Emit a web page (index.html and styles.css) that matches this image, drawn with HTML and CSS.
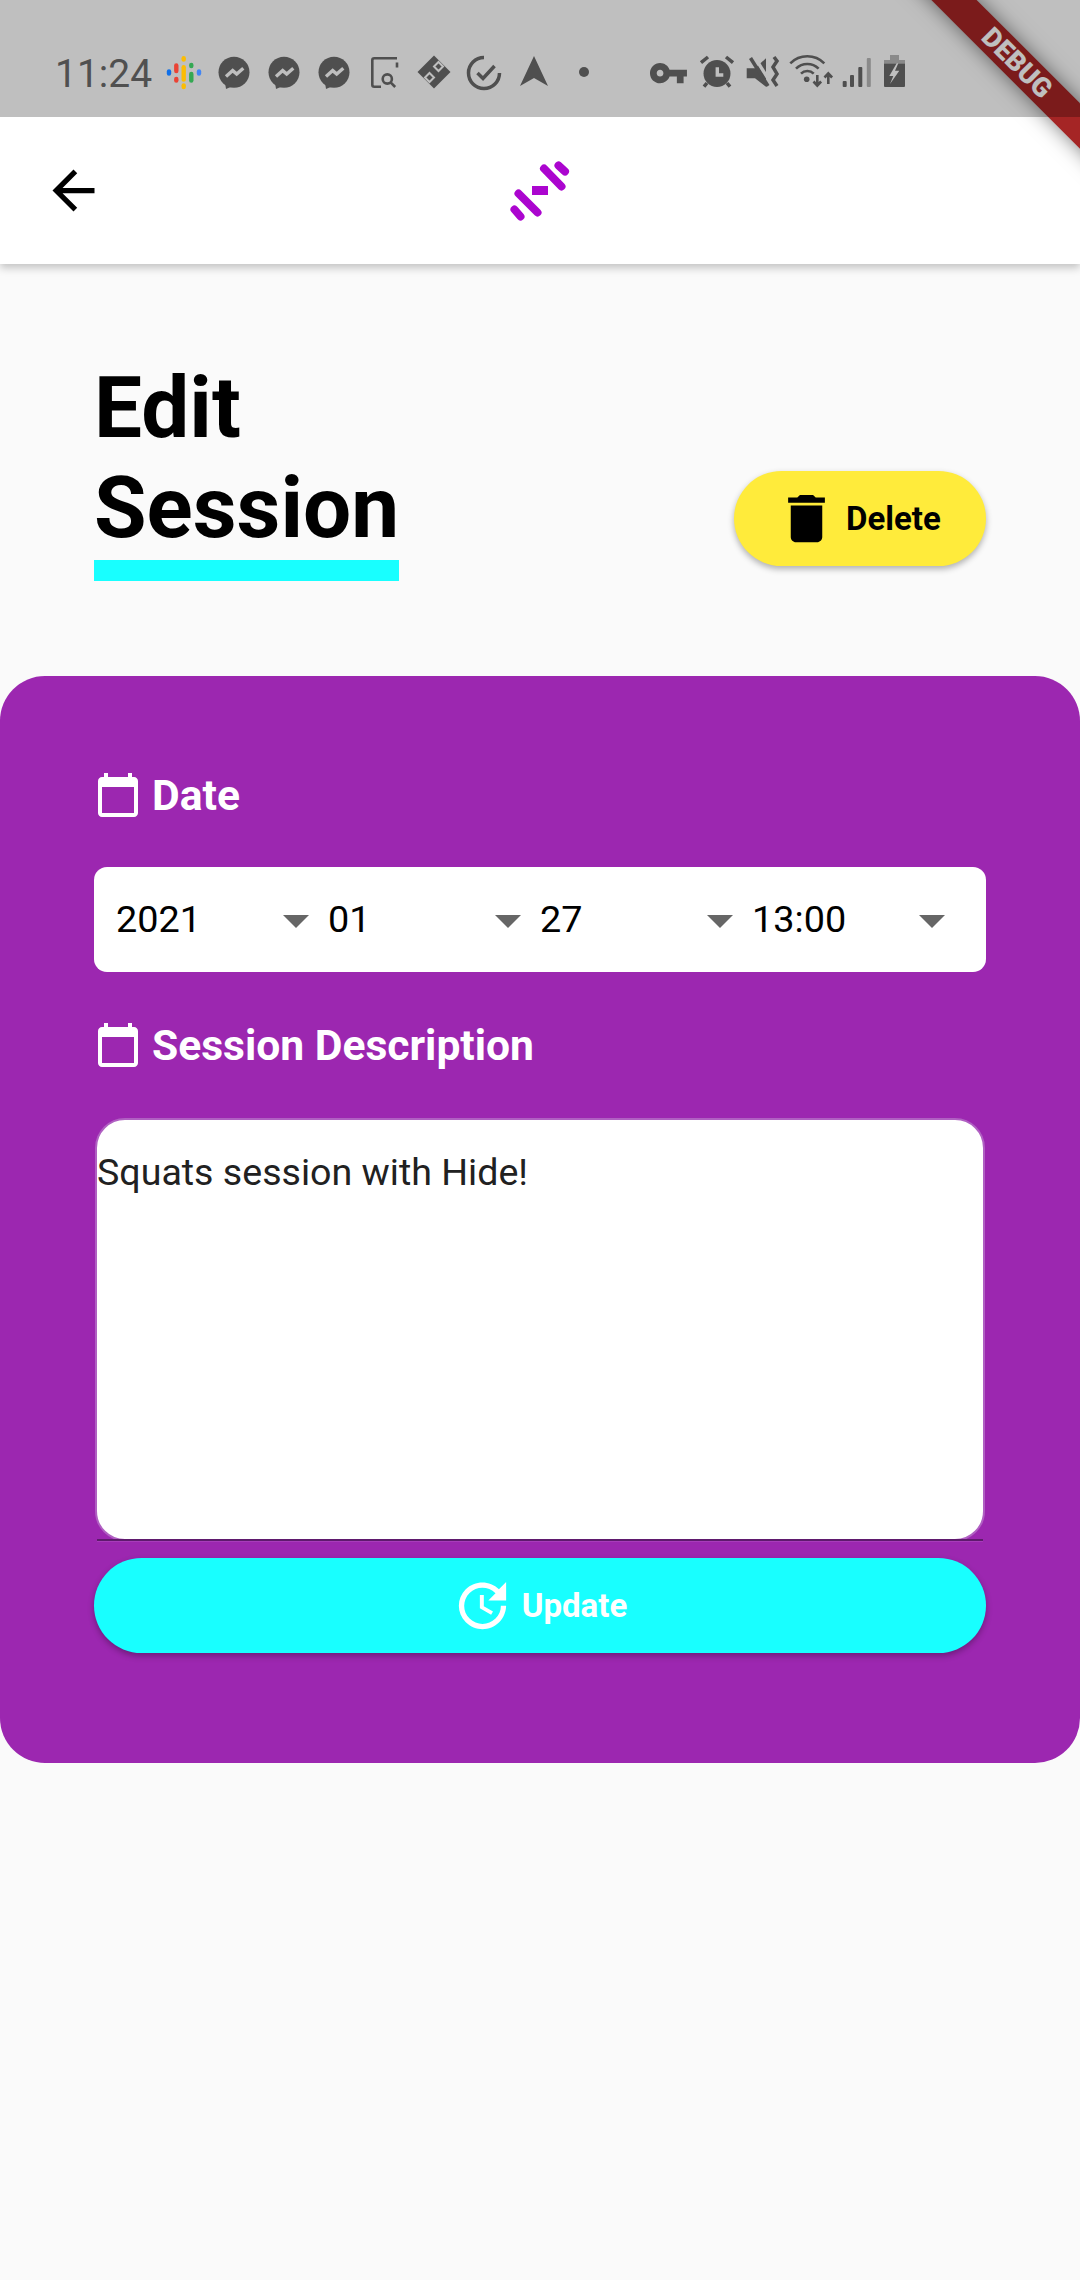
FILE: index.html
```html
<!DOCTYPE html>
<html lang="en">
<head>
<meta charset="utf-8">
<title>Edit Session</title>
<link rel="stylesheet" href="styles.css">
</head>
<body>
<div class="screen">
  <div class="debug-banner">DEBUG</div>

  <header class="top">
    <div class="statusbar">
      <span class="time">11:24</span>
      <svg class="cell" viewBox="0 0 50 50">
        <rect x="7.8" y="22.3" width="4.4" height="6.4" rx="2.2" fill="#0f6fe8"/>
        <rect x="15.1" y="16.3" width="4.4" height="10" rx="2.2" fill="#ea4335"/>
        <rect x="15.1" y="29.7" width="4.4" height="6" rx="2.2" fill="#ea4335"/>
        <rect x="22.5" y="9" width="4.4" height="5.7" rx="2.2" fill="#fbbc04"/>
        <rect x="22.5" y="18" width="4.4" height="16.7" rx="2.2" fill="#fbbc04"/>
        <rect x="22.5" y="36.3" width="4.4" height="6" rx="2.2" fill="#fbbc04"/>
        <rect x="30.1" y="15.7" width="4.4" height="5.6" rx="2.2" fill="#34a853"/>
        <rect x="30.1" y="24.7" width="4.4" height="11" rx="2.2" fill="#34a853"/>
        <rect x="37.8" y="22.3" width="4.4" height="6.4" rx="2.2" fill="#4285f4"/>
      </svg>
      <svg class="cell" viewBox="0 0 50 50"><circle cx="25" cy="25.3" r="15.5" class="ink"/><path class="ink" d="M16 35l1 7 7-3z"/><path class="cut" d="M17 29.6l6.7-6 4 3.4 6.6-5.7"/></svg>
      <svg class="cell" viewBox="0 0 50 50"><circle cx="25" cy="25.3" r="15.5" class="ink"/><path class="ink" d="M16 35l1 7 7-3z"/><path class="cut" d="M17 29.6l6.7-6 4 3.4 6.6-5.7"/></svg>
      <svg class="cell" viewBox="0 0 50 50"><circle cx="25" cy="25.3" r="15.5" class="ink"/><path class="ink" d="M16 35l1 7 7-3z"/><path class="cut" d="M17 29.6l6.7-6 4 3.4 6.6-5.7"/></svg>
      <svg class="cell" viewBox="0 0 50 50"><path class="line" d="M38 11.3H15.3a2 2 0 0 0-2 2v24.4a2 2 0 0 0 2 2H22M38 15.5v5"/><circle class="line" cx="28.3" cy="32" r="4.6"/><path class="line" d="M31.6 35.4l4.6 4.6"/></svg>
      <svg class="cell" viewBox="0 0 50 50"><path class="ink" d="M25 8.500l16.500 16.500-16.500 16.500L8.500 25z"/><path class="cut thin" d="M29.500 15l4.500 4.500-4.500 4.500-4.500-4.500zM20.500 26l4.500 4.500-4.500 4.500-4.500-4.500z"/></svg>
      <svg class="cell" viewBox="0 0 50 50"><path class="line thick" d="M25 10.500a15.500 15.500 0 1 0 15.500 15.500"/><path class="line thick" d="M18.500 26l5.500 5.500 11.500-12.500"/></svg>
      <svg class="cell" viewBox="0 0 50 50"><path class="ink" d="M25 9l14 30-14-8-14 8z"/></svg>
      <svg class="cell" viewBox="0 0 50 50"><circle class="ink" cx="25" cy="25" r="5"/></svg>

      <div class="status-right">
        <svg class="w48" viewBox="0 0 48 50"><g transform="translate(3.3 6) scale(1.68)"><path class="ink" d="M12.65 10C11.83 7.67 9.61 6 7 6c-3.31 0-6 2.69-6 6s2.69 6 6 6c2.61 0 4.83-1.67 5.65-4H17v4h4v-4h2v-4H12.65zM7 14c-1.1 0-2-.9-2-2s.9-2 2-2 2 .9 2 2-.9 2-2 2z"/></g></svg>
        <svg class="w48" viewBox="0 0 48 50"><circle class="ink" cx="24" cy="26.5" r="13.5"/><path class="line thick" d="M8 15.7L15 10M40 15.7L33 10M11 39.7l3-3.7M37 39.7l-3-3.7"/><path class="cut" d="M24.3 20.3V28h6"/></svg>
        <svg class="w44" viewBox="0 0 44 50"><path class="ink" d="M5.7 21.3H14l11-10v28.4l-11-8.4H5.7z"/><path class="cut" d="M13 9l18 29"/><path class="line thick" d="M9.5 11L27 39"/><path class="line thick" d="M33 10l3 4-4 6 4 7-4 6 4 6"/></svg>
        <svg class="w53" viewBox="0 0 53 50"><path class="line" d="M5.3 16.3A24 24 0 0 1 39.3 16.3M11 21.7A16 16 0 0 1 33.6 21.7M16 26.6A9 9 0 0 1 28.7 26.6"/><circle class="ink" cx="21.7" cy="32.3" r="2.8"/><path class="line" d="M32.3 28v10M28.5 34.5l3.8 4 3.8-4M43.3 37V27M39.5 30.5l3.8-4 3.8 4"/></svg>
        <svg class="w38" viewBox="0 0 38 50"><rect class="ink" x="4.7" y="34" width="4" height="6" rx="1"/><rect class="ink" x="12" y="28" width="4" height="12" rx="1"/><rect class="ink" x="20.3" y="20" width="4" height="20" rx="1"/><rect class="dim" x="28.8" y="11" width="4" height="29" rx="1"/></svg>
        <svg class="w36" viewBox="0 0 36 50"><path class="dim" d="M14 8h9v5h6v3.5H8V13h6z"/><path class="ink" d="M8 16.5h21V39a1 1 0 0 1-1 1H9a1 1 0 0 1-1-1z"/><path class="bolt" d="M20.7 16.3L13.3 29h4L14 37l9.3-13.3H19l3.3-7.4z"/></svg>
      </div>
    </div>

    <div class="appbar">
      <svg class="back" viewBox="0 0 24 24"><path d="M20 11H7.83l5.59-5.59L12 4l-8 8 8 8 1.41-1.41L7.83 13H20v-2z"/></svg>
      <svg class="logo" viewBox="500 150 80 80">
        <path class="logo-stroke" d="M558.5 165.5l6.5 6M544 168.5l17.5 18M518.5 193.500l19 19M514.500 209.500l6 7"/>
        <rect class="logo-fill" x="532" y="186" width="16" height="9"/>
      </svg>
      <span></span>
    </div>
  </header>

  <main>
    <section class="title-row">
      <h1 class="title">Edit<br>Session</h1>
      <button class="pill delete">
        <svg class="pill-icon" viewBox="0 0 24 24"><path d="M19 4h-3.5l-1-1h-5l-1 1H5v2h14V4zM6 19c0 1.1.9 2 2 2h8c1.1 0 2-.9 2-2V7H6v12z"/></svg>
        <span>Delete</span>
      </button>
    </section>

    <section class="panel">
      <div class="label">
        <svg class="label-icon" viewBox="0 0 24 24"><path d="M20 3h-1V1h-2v2H7V1H5v2H4c-1.1 0-2 .9-2 2v16c0 1.1.9 2 2 2h16c1.1 0 2-.9 2-2V5c0-1.1-.9-2-2-2zm0 18H4V8h16v13z"/></svg>
        <span>Date</span>
      </div>
      <div class="selects">
        <div class="select"><span>2021</span><svg class="caret" viewBox="0 0 26 13"><path d="M0 0h26L13 13z"/></svg></div>
        <div class="select"><span>01</span><svg class="caret" viewBox="0 0 26 13"><path d="M0 0h26L13 13z"/></svg></div>
        <div class="select"><span>27</span><svg class="caret" viewBox="0 0 26 13"><path d="M0 0h26L13 13z"/></svg></div>
        <div class="select"><span>13:00</span><svg class="caret" viewBox="0 0 26 13"><path d="M0 0h26L13 13z"/></svg></div>
      </div>
      <div class="label">
        <svg class="label-icon" viewBox="0 0 24 24"><path d="M20 3h-1V1h-2v2H7V1H5v2H4c-1.1 0-2 .9-2 2v16c0 1.1.9 2 2 2h16c1.1 0 2-.9 2-2V5c0-1.1-.9-2-2-2zm0 18H4V8h16v13z"/></svg>
        <span>Session Description</span>
      </div>
      <div class="description">Squats session with Hide!</div>
      <button class="pill update">
        <svg class="pill-icon" viewBox="0 0 24 24"><path d="M21 10.12h-6.78l2.74-2.82c-2.73-2.7-7.15-2.8-9.88-.1-2.73 2.71-2.73 7.08 0 9.79s7.15 2.71 9.88 0C18.32 15.65 19 14.08 19 12.1h2c0 1.98-.88 4.55-2.64 6.29-3.51 3.48-9.21 3.48-12.72 0-3.5-3.47-3.53-9.11-.02-12.58s9.14-3.47 12.65 0L21 3v7.12zM12.5 8v4.25l3.5 2.08-.72 1.21L11 13V8h1.5z"/></svg>
        <span>Update</span>
      </button>
    </section>
  </main>
</div>
</body>
</html>
```

FILE: styles.css
```css
* { box-sizing: border-box; }
html, body { margin: 0; padding: 0; }
body { font-family: Roboto, sans-serif; background: #fafafa; }

.screen {
  position: relative;
  width: 1080px;
  height: 2280px;
  overflow: hidden;
  background: #fafafa;
}

.top { background: #fff; box-shadow: 0 4px 8px rgba(0, 0, 0, 0.22); }

/* status bar: a translucent scrim that also dims the debug ribbon */
.statusbar {
  position: relative;
  z-index: 3;
  display: flex;
  align-items: flex-start;
  height: 117px;
  padding: 47px 168px 0 55px;
  background: rgba(0, 0, 0, 0.25);
}
.time {
  width: 104px;
  font-size: 39px;
  line-height: 54px;
  color: #505050;
}
.cell { width: 50px; height: 50px; flex: none; }
.status-right { display: flex; margin-left: auto; }
.w48 { width: 48px; height: 50px; }
.w44 { width: 44px; height: 50px; }
.w53 { width: 53px; height: 50px; }
.w38 { width: 38px; height: 50px; }
.w36 { width: 36px; height: 50px; }
.ink { fill: #4f4f4f; }
.dim { fill: #8a8a8a; }
.bolt { fill: #bfbfbf; }
.cut { fill: none; stroke: #bfbfbf; stroke-width: 3.4; }
.cut.thin { stroke-width: 2; }
.line { fill: none; stroke: #4f4f4f; stroke-width: 2.6; }
.line.thick { stroke-width: 3.5; }

.debug-banner {
  position: absolute;
  z-index: 2;
  left: 867px;
  top: 47px;
  width: 300px;
  height: 32px;
  transform: rotate(45deg);
  background: #a52525;
  box-shadow: 0 0 20px rgba(0, 0, 0, 0.5);
  color: #fff;
  font-size: 27px;
  font-weight: 900;
  line-height: 32px;
  text-align: center;
}

.appbar {
  display: grid;
  grid-template-columns: 1fr auto 1fr;
  align-items: start;
  height: 147px;
}
.back { width: 63px; height: 63px; margin: 42px 0 0 42px; }
.logo { width: 80px; height: 80px; margin-top: 33px; }
.logo-stroke { fill: none; stroke: #ab05cf; stroke-width: 8; stroke-linecap: round; }
.logo-fill { fill: #ab05cf; }

.title-row {
  display: flex;
  align-items: flex-end;
  justify-content: space-between;
  padding: 94px 94px 0;
}
.title {
  width: 305px;
  margin: 0;
  padding-bottom: 2px;
  border-bottom: 21px solid #18ffff;
  font-size: 85.4px;
  font-weight: 700;
  line-height: 100px;
  color: #000;
}
.pill {
  display: flex;
  align-items: center;
  height: 95px;
  border: 0;
  border-radius: 48px;
  font-family: inherit;
  font-size: 33px;
  font-weight: 700;
  box-shadow: 0 3px 6px rgba(0, 0, 0, 0.3);
}
.pill-icon { width: 63px; height: 63px; flex: none; }
.delete {
  width: 252px;
  margin-bottom: 15px;
  padding: 0 0 0 41px;
  gap: 8px;
  background: #ffeb3b;
  color: #000;
}
.delete svg path { fill: #000; }

.panel {
  margin-top: 95px;
  padding: 95px 94px 110px;
  border-radius: 45px;
  background: #9c27b0;
}
.label {
  display: flex;
  align-items: center;
  gap: 10px;
  height: 48px;
  color: #fff;
  font-size: 42.6px;
  font-weight: 700;
  line-height: 49px;
}
.label-icon { width: 48px; height: 48px; flex: none; }
.label-icon path { fill: #fff; }

.selects {
  display: grid;
  grid-template-columns: repeat(4, 212px);
  align-items: center;
  height: 105px;
  margin: 48px 0 49px;
  padding-left: 22px;
  background: #fff;
  border-radius: 13px;
}
.select {
  display: flex;
  align-items: center;
  justify-content: space-between;
  padding-right: 19px;
  color: #000;
  font-size: 37.8px;
  line-height: 43px;
}
.caret { width: 26px; height: 13px; margin-top: 4px; flex: none; }
.caret path { fill: #666; }

.description {
  position: relative;
  height: 423px;
  margin: 49px 1px 0;
  padding: 30px 0 0;
  border: 2px solid #b060c2;
  border-radius: 30px;
  background: #fff;
  color: #212121;
  font-size: 37.6px;
  line-height: 44px;
}
.description::after {
  content: "";
  position: absolute;
  left: 0;
  right: 0;
  bottom: -2px;
  height: 2px;
  background: #5f1a6e;
  box-shadow: 0 1px 0 #a83cba;
}

.update {
  justify-content: center;
  gap: 8px;
  width: 100%;
  margin-top: 17px;
  padding: 0 2px 0 0;
  background: #18ffff;
  color: #fff;
}
.update svg path { fill: #fff; }
```
